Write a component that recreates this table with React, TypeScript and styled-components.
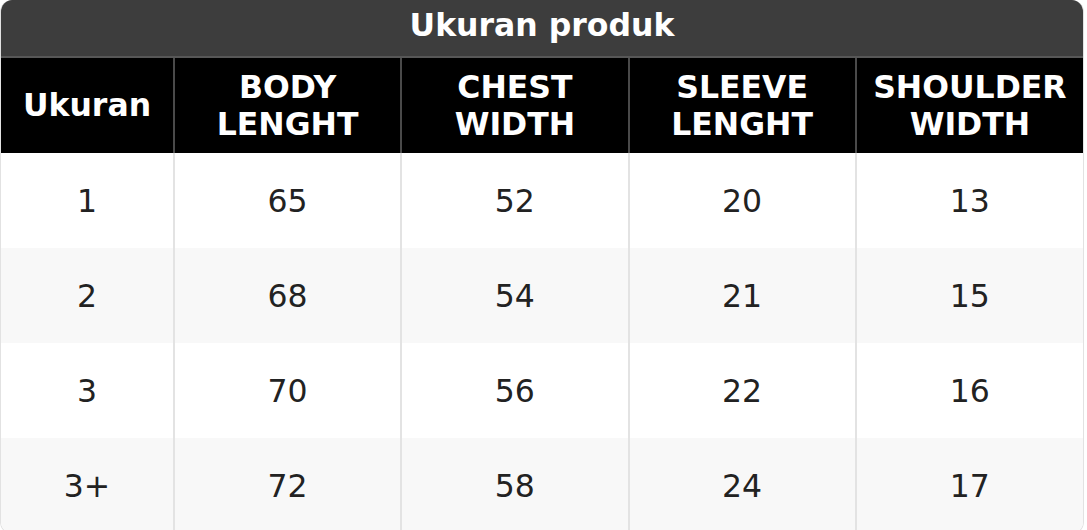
import React from "react";
import styled, { createGlobalStyle } from "styled-components";

const Global = createGlobalStyle`
  html, body { margin: 0; padding: 0; background: #fff; }
  body { font-family: "DejaVu Sans", Verdana, sans-serif; }
`;

const Wrap = styled.div`
  width: 1084px;
  border-radius: 12px;
  overflow: hidden;
  border: 1px solid #e2e2e2;
  border-top: none;
  box-sizing: border-box;
`;

const Title = styled.div`
  height: 58px;
  background: #3d3d3d;
  color: #fff;
  font-weight: bold;
  font-size: 31.5px;
  display: flex;
  align-items: center;
  justify-content: center;
  border-bottom: 2px solid #575757;
  padding-bottom: 6px;
  box-sizing: border-box;
`;

const Table = styled.table`
  width: 100%;
  border-collapse: collapse;
  table-layout: fixed;
`;

const Th = styled.th`
  background: #000;
  color: #fff;
  font-size: 31.5px;
  font-weight: bold;
  line-height: 37px;
  height: 95px;
  padding: 0 0 0 0;
  text-align: center;
  border-left: 2px solid #4a4a4a;
  &:first-child { border-left: none; }
`;

const Tr = styled.tr<{ $alt: boolean }>`
  background: ${(p) => (p.$alt ? "#f8f8f8" : "#fff")};
`;

const Td = styled.td`
  height: 95px;
  padding: 0 0 0 0;
  text-align: center;
  font-size: 31.5px;
  color: #222;
  border-left: 2px solid #e3e3e3;
  &:first-child { border-left: none; }
`;

const headers = [
  ["Ukuran"],
  ["BODY", "LENGHT"],
  ["CHEST", "WIDTH"],
  ["SLEEVE", "LENGHT"],
  ["SHOULDER", "WIDTH"],
];

const rows = [
  ["1", "65", "52", "20", "13"],
  ["2", "68", "54", "21", "15"],
  ["3", "70", "56", "22", "16"],
  ["3+", "72", "58", "24", "17"],
];

export default function App() {
  return (
    <>
      <Global />
      <Wrap>
        <Title>Ukuran produk</Title>
        <Table>
          <colgroup>
            <col style={{ width: 173 }} />
            <col />
            <col />
            <col />
            <col />
          </colgroup>
          <thead>
            <tr>
              {headers.map((h, i) => (
                <Th key={i}>
                  {h.map((l, j) => (
                    <React.Fragment key={j}>
                      {j > 0 && <br />}
                      {l}
                    </React.Fragment>
                  ))}
                </Th>
              ))}
            </tr>
          </thead>
          <tbody>
            {rows.map((r, i) => (
              <Tr key={i} $alt={i % 2 === 1}>
                {r.map((c, j) => (
                  <Td key={j}>{c}</Td>
                ))}
              </Tr>
            ))}
          </tbody>
        </Table>
      </Wrap>
    </>
  );
}
